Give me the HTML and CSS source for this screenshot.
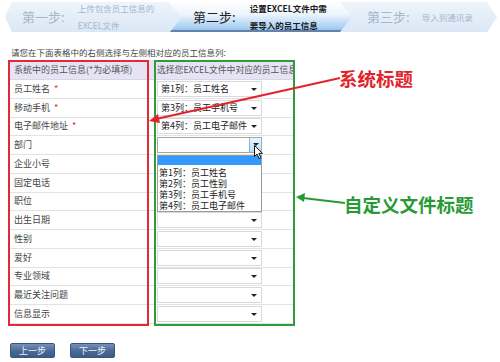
FILE: index.html
```html
<!DOCTYPE html>
<html lang="zh-CN">
<head>
<meta charset="utf-8">
<link rel="stylesheet" href="styles.css">
</head>
<body>
<div class="steps">
  <div class="step s1"><span class="num">第一步:</span><span class="desc">上传包含员工信息的<br>EXCEL文件</span></div>
  <div class="step s2"><span class="num">第二步:</span><span class="desc">设置EXCEL文件中需<br>要导入的员工信息</span></div>
  <div class="step s3"><span class="num">第三步:</span><span class="desc">导入到通讯录</span></div>
</div>
<p class="intro">请您在下面表格中的右侧选择与左侧相对应的员工信息列:</p>
<div class="map">
  <div class="row head"><div class="cl">系统中的员工信息(*为必填项)</div><div class="gap"></div><div class="cr">选择您EXCEL文件中对应的员工信息</div></div>
  <div class="row"><div class="cl">员工姓名 <em>*</em></div><div class="gap"></div><div class="cr"><div class="sel">第1列：员工姓名<i></i></div></div></div>
  <div class="row"><div class="cl">移动手机 <em>*</em></div><div class="gap"></div><div class="cr"><div class="sel">第3列：员工手机号<i></i></div></div></div>
  <div class="row"><div class="cl">电子邮件地址 <em>*</em></div><div class="gap"></div><div class="cr"><div class="sel">第4列：员工电子邮件<i></i></div></div></div>
  <div class="row"><div class="cl">部门</div><div class="gap"></div><div class="cr"><div class="sel open"><b class="btn"><i></i></b></div></div></div>
  <div class="row"><div class="cl">企业小号</div><div class="gap"></div><div class="cr"><div class="sel"><i></i></div></div></div>
  <div class="row"><div class="cl">固定电话</div><div class="gap"></div><div class="cr"><div class="sel"><i></i></div></div></div>
  <div class="row"><div class="cl">职位</div><div class="gap"></div><div class="cr"><div class="sel"><i></i></div></div></div>
  <div class="row"><div class="cl">出生日期</div><div class="gap"></div><div class="cr"><div class="sel"><i></i></div></div></div>
  <div class="row"><div class="cl">性别</div><div class="gap"></div><div class="cr"><div class="sel"><i></i></div></div></div>
  <div class="row"><div class="cl">爱好</div><div class="gap"></div><div class="cr"><div class="sel"><i></i></div></div></div>
  <div class="row"><div class="cl">专业领域</div><div class="gap"></div><div class="cr"><div class="sel"><i></i></div></div></div>
  <div class="row"><div class="cl">最近关注问题</div><div class="gap"></div><div class="cr"><div class="sel"><i></i></div></div></div>
  <div class="row"><div class="cl">信息显示</div><div class="gap"></div><div class="cr"><div class="sel"><i></i></div></div></div>
  <div class="box red"></div>
  <div class="box green"></div>
  <div class="dropdown">
    <div class="opt hl"></div>
    <div class="opt">第1列：员工姓名</div>
    <div class="opt">第2列：员工性别</div>
    <div class="opt">第3列：员工手机号</div>
    <div class="opt">第4列：员工电子邮件</div>
  </div>
  <svg class="cursor" width="10" height="15" viewBox="0 0 10 15"><path d="M0.5 0.5 L0.5 11.5 L3 9 L5 13.5 L6.8 12.7 L4.9 8.4 L8.5 8.4 Z" fill="#fff" stroke="#111" stroke-width="1"/></svg>
</div>
<div class="btns"><span class="button">上一步</span><span class="button">下一步</span></div>

<div class="note note-red">系统标题</div>
<div class="note note-green">自定义文件标题</div>
<svg class="arrows" width="500" height="362" viewBox="0 0 500 362">
  <line x1="340" y1="78" x2="156" y2="119" stroke="#e3232b" stroke-width="2"/>
  <polygon points="149,121 158,114 160,123" fill="#e3232b"/>
  <line x1="345" y1="203" x2="303" y2="198" stroke="#279a35" stroke-width="2"/>
  <polygon points="296,197 305,193 304,202" fill="#279a35"/>
</svg>
</body>
</html>
```

FILE: styles.css
```css
* { box-sizing: border-box; }
html, body { margin: 0; padding: 0; }
body {
  position: relative;
  width: 500px;
  height: 362px;
  overflow: hidden;
  background: #fff;
  font-family: "Noto Sans CJK SC", "Liberation Sans", sans-serif;
  color: #333;
}

.steps {
  display: flex;
  height: 30px;
  margin: 2px 0 0 5px;
}
.step {
  flex: none;
  display: flex;
  align-items: center;
  height: 30px;
  background: linear-gradient(#eef4fb, #dae7f5);
  color: #a3b7cd;
}
.step .num { font-size: 13px; line-height: 16px; }
.step .desc { font-size: 8.5px; line-height: 17px; }
.s1 {
  width: 180px;
  padding-left: 17px;
  clip-path: polygon(7px 0, calc(100% - 14px) 0, 100% 50%, calc(100% - 14px) 100%, 7px 100%, 0 50%);
}
.s1 .desc { margin-left: 13px; }
.s2 {
  width: 187px;
  margin-left: -17px;
  padding-left: 25px;
  background: linear-gradient(#ffffff 0%, #eef5fd 40%, #a9cff3 85%, #8dbbe9 100%);
  box-shadow: inset 0 -2px 0 #6383ab;
  color: #1f1f1f;
  clip-path: polygon(0 0, calc(100% - 13px) 0, 100% 50%, calc(100% - 13px) 100%, 2px 100%, 14px 50%);
}
.s2 .num { color: #222; }
.s2 .desc { margin-left: 14px; color: #1a1a1a; font-weight: bold; }
.s3 {
  width: 157px;
  margin-left: -15px;
  padding-left: 27px;
  clip-path: polygon(0 0, calc(100% - 10px) 0, 100% 50%, calc(100% - 10px) 100%, 0 100%, 12px 50%);
}
.s3 .desc { margin-left: 12px; }

.intro {
  margin: 14px 0 2px 11px;
  font-size: 8.5px;
  line-height: 12px;
  color: #444;
}

.map {
  position: relative;
  margin-left: 9px;
  width: 286px;
}
.row {
  display: flex;
  height: 18.75px;
  border-bottom: 1px solid #e2e2e2;
  font-size: 9px;
  line-height: 12px;
  color: #444;
}
.row.head {
  height: 20px;
  background: #e6e4f4;
  color: #555;
  border-bottom: 1px solid #d8d6e6;
  white-space: nowrap;
  overflow: hidden;
}
.cl {
  width: 139px;
  padding-left: 5px;
  display: flex;
  align-items: center;
}
.cl em { font-style: normal; color: #e0262e; margin-left: 4px; }
.gap { width: 7px; }
.cr {
  width: 140px;
  display: flex;
  align-items: center;
  overflow: hidden;
  white-space: nowrap;
}
.head .cr { padding-left: 2px; font-size: 8.8px; }
.sel {
  position: relative;
  margin-left: 2px;
  width: 105px;
  height: 16px;
  border: 1px solid #dadada;
  background: #fff;
  padding-left: 3px;
  display: flex;
  align-items: center;
  font-size: 9px;
  color: #222;
  white-space: nowrap;
}
.sel i {
  position: absolute;
  right: 4px;
  top: 6px;
  width: 0;
  height: 0;
  border-left: 3px solid transparent;
  border-right: 3px solid transparent;
  border-top: 3px solid #222;
}
.sel.open { border-color: #a6a6a6; }
.sel .btn {
  position: absolute;
  right: 0;
  top: 0;
  width: 12px;
  height: 14px;
  background: linear-gradient(#eaf4fd, #bcdcf6);
  border-left: 1px solid #7fb1e2;
}
.sel .btn i { right: 2px; top: 5px; }

.box {
  position: absolute;
  top: 0;
  height: 266px;
  border: 2px solid;
  pointer-events: none;
}
.box.red { left: -1px; width: 141px; border-color: #e12a35; }
.box.green { left: 145px; width: 141px; border-color: #2f9b3b; }

.dropdown {
  position: absolute;
  left: 148px;
  top: 95px;
  width: 105px;
  height: 57px;
  background: #fff;
  border: 1px solid #9a9a9a;
  font-size: 9px;
  color: #222;
}
.opt {
  height: 11px;
  line-height: 11px;
  padding-left: 1px;
  white-space: nowrap;
}
.opt.hl {
  height: 9px;
  background: #3399ff;
  margin-bottom: 2px;
}
.cursor {
  position: absolute;
  left: 245px;
  top: 85px;
}

.btns {
  display: flex;
  gap: 15px;
  margin: 19px 0 0 10px;
}
.button {
  width: 45px;
  height: 15px;
  border: 1px solid #3a5680;
  border-radius: 2px;
  background: linear-gradient(#7590b7, #4a6895 55%, #3d5b88);
  color: #eef2f8;
  font-size: 9px;
  line-height: 13px;
  text-align: center;
}

.note {
  position: absolute;
  font-weight: bold;
  white-space: nowrap;
}
.note-red {
  left: 339px;
  top: 66px;
  font-size: 18.5px;
  line-height: 24px;
  color: #e3232b;
}
.note-green {
  left: 344px;
  top: 192px;
  font-size: 18.5px;
  line-height: 24px;
  color: #279a35;
}
.arrows {
  position: absolute;
  left: 0;
  top: 0;
  pointer-events: none;
}
```
